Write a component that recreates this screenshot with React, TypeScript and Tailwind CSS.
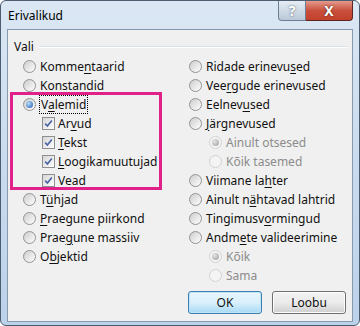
import React from 'react';

function Radio({ checked = false, disabled = false }: { checked?: boolean; disabled?: boolean }) {
  return (
    <span
      className={`w-[13px] h-[13px] rounded-full border flex items-center justify-center shrink-0 ${
        disabled
          ? 'border-[#d2d2d2] bg-[#f4f4f4]'
          : 'border-[#939393] bg-gradient-to-br from-[#cdcdcd] to-white'
      }`}
    >
      {checked && (
        <span
          className={`w-[7px] h-[7px] rounded-full ${
            disabled
              ? 'bg-[radial-gradient(circle_at_35%_35%,#e4e4e4,#9c9c9c)]'
              : 'bg-[radial-gradient(circle_at_35%_35%,#b8defa,#1c58b5)]'
          }`}
        />
      )}
    </span>
  );
}

function Check() {
  return (
    <span className="w-[13px] h-[13px] border border-[#8e8f8f] bg-gradient-to-br from-[#d6d6d6] to-white flex items-center justify-center shrink-0">
      <svg width="9" height="9" viewBox="0 0 9 9">
        <path d="M1.2 4.6 L3.4 7 L7.8 1.4" stroke="#4663a3" strokeWidth="1.6" fill="none" />
      </svg>
    </span>
  );
}

function Row({
  control,
  children,
  indent = false,
  disabled = false,
}: {
  control: React.ReactNode;
  children: React.ReactNode;
  indent?: boolean;
  disabled?: boolean;
}) {
  return (
    <div className={`h-[19px] flex items-center gap-[4px] ${indent ? 'pl-[20px]' : ''} ${disabled ? 'text-[#8c8c8c]' : ''}`}>
      {control}
      <span>{children}</span>
    </div>
  );
}

const U = ({ children }: { children: React.ReactNode }) => (
  <span className="underline underline-offset-[2px] decoration-1">{children}</span>
);

export default function App() {
  return (
    <div className="w-[360px] h-[326px] bg-white font-['Noto_Sans',sans-serif] text-[12px] text-[#111]">
      <div className="w-[360px] h-[326px] rounded-[6px] border border-[#4d5d70] bg-gradient-to-b from-[#dbe7f4] via-[#c9dbee] to-[#bcd2ea] flex flex-col">
        {/* title bar */}
        <div className="h-[28px] flex items-start justify-between pl-[7px] pr-[6px]">
          <span className="mt-[6px] text-[12px] text-black">Erivalikud</span>
          <div className="flex">
            <div className="w-[28px] h-[20px] border border-[#6d7e91] border-t-0 rounded-bl-[4px] bg-gradient-to-b from-[#e6edf4] to-[#b9c8d8] flex items-center justify-center text-white font-bold text-[14px] [text-shadow:0_0_2px_#44505c]">
              ?
            </div>
            <div className="w-[47px] h-[20px] border border-[#5a2620] border-t-0 border-l-0 rounded-br-[4px] bg-gradient-to-b from-[#e39a8d] via-[#c9503c] to-[#c4402b] flex items-center justify-center text-white font-bold text-[14px] [text-shadow:0_0_2px_#3a0f0a]">
              X
            </div>
          </div>
        </div>

        {/* client area */}
        <div className="ml-[6px] mr-[6px] h-[293px] border border-[#8799ad] bg-[#f0f0f0] flex flex-col">
          <div className="h-[27px] flex items-end pl-[6px] pr-[5px] pb-[2px]">
            <span className="leading-[16px]">Vali</span>
            <div className="flex-1 ml-[5px] mb-[7px] border-t border-[#d5dfe5] border-b border-b-white" />
          </div>

          <div className="flex">
            <div className="relative w-[166px] ml-[15px]">
              <Row control={<Radio />}>Komme<U>n</U>taarid</Row>
              <Row control={<Radio />}><U>K</U>onstandid</Row>
              <Row control={<Radio checked />}>
                <span className="outline outline-1 outline-dotted outline-black px-[1px]">V<U>a</U>lemid</span>
              </Row>
              <div className="pl-[19px]">
                <div className="h-[19px] flex items-center gap-[3px]"><Check /><span>Ar<U>v</U>ud</span></div>
                <div className="h-[19px] flex items-center gap-[3px]"><Check /><span><U>T</U>ekst</span></div>
                <div className="h-[19px] flex items-center gap-[3px]"><Check /><span><U>L</U>oogikamuutujad</span></div>
                <div className="h-[19px] flex items-center gap-[3px]"><Check /><span>Vea<U>d</U></span></div>
              </div>
              <Row control={<Radio />}>T<U>ü</U>hjad</Row>
              <Row control={<Radio />}><U>P</U>raegune piirkond</Row>
              <Row control={<Radio />}>Prae<U>g</U>une massiiv</Row>
              <Row control={<Radio />}>O<U>b</U>jektid</Row>

              <div className="absolute left-[-13px] top-[35px] w-[152px] h-[98px] border-[3px] border-[#e0218a]" />
            </div>

            <div className="flex-1">
              <Row control={<Radio />}>Ridade erinevu<U>s</U>ed</Row>
              <Row control={<Radio />}>Vee<U>r</U>gude erinevused</Row>
              <Row control={<Radio />}>Eelnev<U>u</U>sed</Row>
              <Row control={<Radio />}><U>J</U>ärgnevused</Row>
              <Row control={<Radio checked disabled />} indent disabled>Ainult otsesed</Row>
              <Row control={<Radio disabled />} indent disabled>Kõik tasemed</Row>
              <Row control={<Radio />}>Viimane la<U>h</U>ter</Row>
              <Row control={<Radio />}>Ainult n<U>ä</U>htavad lahtrid</Row>
              <Row control={<Radio />}>Tingimusv<U>o</U>rmingud</Row>
              <Row control={<Radio />}>Andm<U>e</U>te valideerimine</Row>
              <Row control={<Radio checked disabled />} indent disabled>Kõik</Row>
              <Row control={<Radio disabled />} indent disabled>Sama</Row>
            </div>
          </div>

          <div className="flex justify-end gap-[10px] pr-[6px] mt-[6px]">
            <button className="w-[74px] h-[23px] rounded-[3px] border border-[#3c7fb1] bg-gradient-to-b from-[#eaf6fd] via-[#d9f0fc] to-[#a7d9f5] shadow-[inset_0_0_0_1px_#bfe5f8]">
              OK
            </button>
            <button className="w-[74px] h-[23px] rounded-[3px] border border-[#707070] bg-gradient-to-b from-[#f2f2f2] via-[#ebebeb] to-[#cfcfcf] shadow-[inset_0_0_0_1px_#fcfcfc]">
              Loobu
            </button>
          </div>
        </div>
      </div>
    </div>
  );
}
